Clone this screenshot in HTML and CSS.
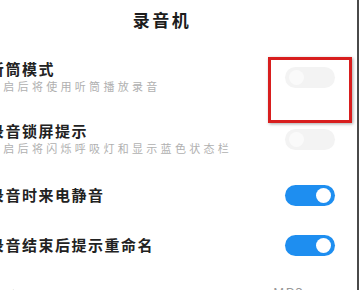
FILE: index.html
```html
<!DOCTYPE html>
<html lang="zh">
<head>
<meta charset="utf-8">
<title>录音机</title>
<link rel="stylesheet" href="styles.css">
</head>
<body>
<div class="frame">
  <div class="page">
    <div class="header">录音机</div>
    <div class="row">
      <div class="text">
        <div class="title">听筒模式</div>
        <div class="sub">开启后将使用听筒播放录音</div>
      </div>
      <span class="switch off"><span class="knob"></span></span>
    </div>
    <div class="row">
      <div class="text">
        <div class="title">录音锁屏提示</div>
        <div class="sub">开启后将闪烁呼吸灯和显示蓝色状态栏</div>
      </div>
      <span class="switch off"><span class="knob"></span></span>
    </div>
    <div class="row">
      <div class="text">
        <div class="title single">录音时来电静音</div>
      </div>
      <span class="switch on"><span class="knob"></span></span>
    </div>
    <div class="row">
      <div class="text">
        <div class="title single">录音结束后提示重命名</div>
      </div>
      <span class="switch on"><span class="knob"></span></span>
    </div>
    <div class="row">
      <div class="text">
        <div class="title single">录音格式</div>
      </div>
      <span class="value">MP3 <span class="chev">&gt;</span></span>
    </div>
  </div>
  <div class="highlight"></div>
</div>
</body>
</html>
```
FILE: styles.css
```css
html, body {
  margin: 0;
  padding: 0;
  background: #ffffff;
}
body {
  width: 360px;
  height: 290px;
  overflow: hidden;
  font-family: "Noto Sans CJK SC", "Noto Sans", sans-serif;
}
.frame {
  position: relative;
  width: 357px;
  height: 290px;
  border-right: 2px solid #4a4a4a;
  overflow: hidden;
  background: #fff;
}
.page {
  margin-left: -11px;
  width: 346px;
}
.header {
  padding: 10px 0 16px;
  line-height: 20px;
  font-size: 17px;
  font-weight: 700;
  letter-spacing: 2.5px;
  text-align: center;
  color: #1c1c1c;
}
.row {
  display: flex;
  align-items: center;
  justify-content: space-between;
  padding: 14px 0;
}
.text {
  display: flex;
  flex-direction: column;
}
.title {
  font-size: 15px;
  line-height: 18px;
  font-weight: 700;
  letter-spacing: 1.5px;
  color: #222;
}
.title.single {
  line-height: 22px;
}
.sub {
  font-size: 11px;
  line-height: 16px;
  letter-spacing: 3.3px;
  color: #b0b0b0;
}
.switch {
  position: relative;
  display: block;
  width: 50px;
  height: 21px;
  border-radius: 11px;
  flex: none;
}
.switch.on {
  background: #1e8ef0;
}
.switch.off {
  background: #f3f3f3;
}
.knob {
  position: absolute;
  top: 3px;
  width: 15px;
  height: 15px;
  border-radius: 50%;
  background: #ffffff;
}
.switch.on .knob {
  right: 4px;
}
.switch.off .knob {
  left: 4px;
  background: #fafafa;
}
.value {
  font-size: 14px;
  line-height: 18px;
  color: #999;
  letter-spacing: 1px;
  margin-right: 2px;
  margin-bottom: 8px;
}
.chev {
  margin-left: 16px;
  color: #aaa;
}
.highlight {
  position: absolute;
  left: 268px;
  top: 57px;
  width: 78px;
  height: 60px;
  border: 3px solid #d81e1e;
  box-shadow: 1px 1px 3px rgba(0,0,0,0.35);
}
```
